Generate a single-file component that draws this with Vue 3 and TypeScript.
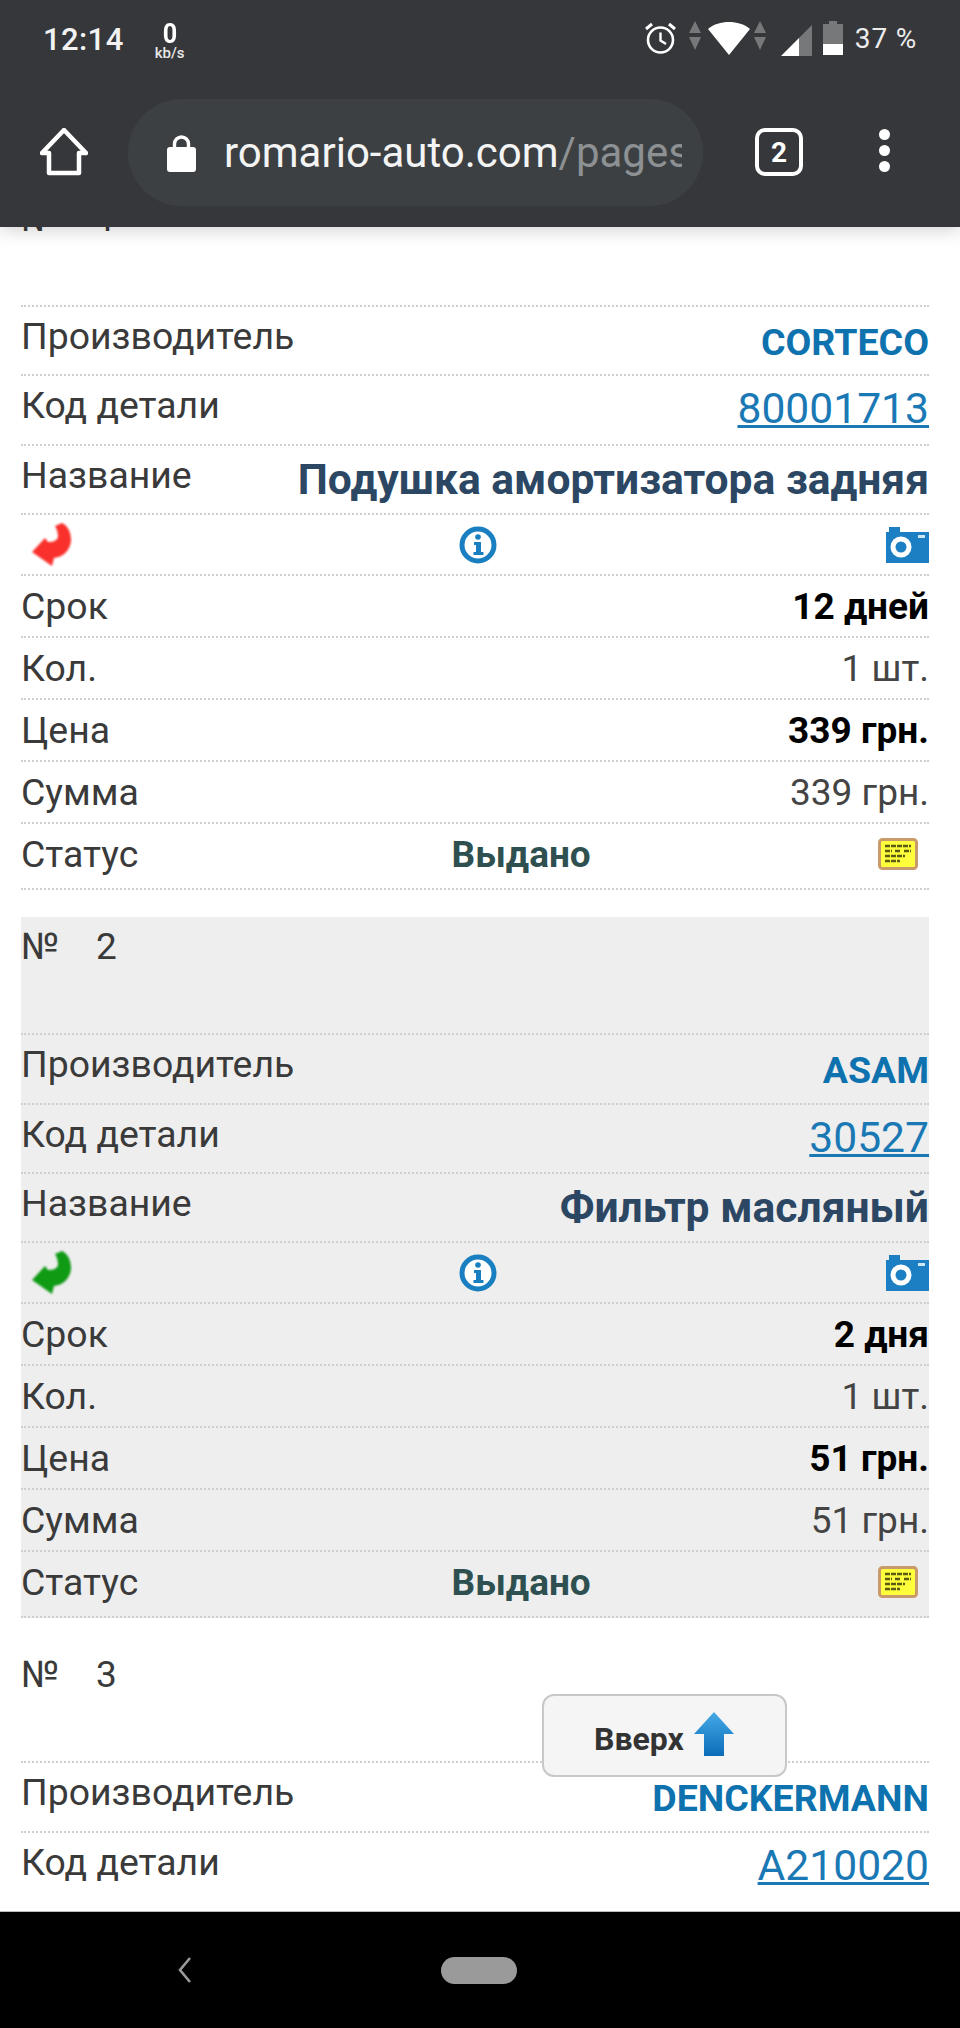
<template>
  <div class="screen">
    <header class="top">
      <div class="status">
        <span class="time">12:14</span>
        <span class="speed"><b>0</b><i>kb/s</i></span>
        <div class="status-icons">
          <svg width="33" height="34" viewBox="0 0 33 34" fill="none" stroke="#fff">
            <circle cx="16.5" cy="19" r="12.5" stroke-width="2.6" />
            <path d="M16.5 11.5V19.5L22 23" stroke-width="2.4" />
            <path d="M2 8L8 3M31 8L25 3" stroke-width="3" />
          </svg>
          <svg class="updown" width="12" height="30" viewBox="0 0 12 30" fill="#77787a">
            <path d="M6 0L12 12H0zM0 16H12L6 29z" />
          </svg>
          <svg width="42" height="34" viewBox="0 0 42 34" fill="#fff">
            <path d="M0 8C6 3 13 1 21 1S36 3 42 8L21 34z" />
          </svg>
          <svg class="updown" width="12" height="30" viewBox="0 0 12 30" fill="#77787a">
            <path d="M6 0L12 12H0zM0 16H12L6 29z" />
          </svg>
          <svg class="signal" width="31" height="31" viewBox="0 0 31 31">
            <path d="M31 0V31H18V13z" fill="#77787a" />
            <path d="M18 13V31H0z" fill="#fff" />
          </svg>
          <svg width="20" height="34" viewBox="0 0 20 34">
            <path d="M6 0H14V3H20V23H0V3H6z" fill="#77787a" />
            <rect y="23" width="20" height="11" fill="#fff" />
          </svg>
          <span class="battery">37 %</span>
        </div>
      </div>
      <div class="toolbar">
        <svg class="home" width="48" height="48" viewBox="0 0 48 48" fill="none" stroke="#fff" stroke-width="4.5" stroke-linejoin="round">
          <path d="M2 25L24 2L46 25H39V45H9V25z" />
        </svg>
        <div class="url">
          <svg width="29" height="38" viewBox="0 0 29 38">
            <path d="M7.5 15V10a7 7 0 0 1 14 0V15" fill="none" stroke="#fff" stroke-width="3.4" />
            <rect y="13" width="29" height="25" rx="3" fill="#fff" />
          </svg>
          <div class="url-text">romario-auto.com<span>/pages</span></div>
        </div>
        <div class="tabs">2</div>
        <div class="dots"><span></span><span></span><span></span></div>
      </div>
    </header>

    <main class="content">
      <section v-for="order in orders" :key="order.num" :class="['order', { shaded: order.shaded }]">
        <div class="num-row"><span>№</span><span>{{ order.num }}</span></div>
        <div class="row tall">
          <span class="label">Производитель</span>
          <span class="brand">{{ order.brand }}</span>
        </div>
        <div class="row tall">
          <span class="label">Код детали</span>
          <a class="code">{{ order.code }}</a>
        </div>
        <template v-if="order.name">
          <div class="row tall">
            <span class="label">Название</span>
            <span class="name">{{ order.name }}</span>
          </div>
          <div class="row icons">
            <svg class="back" width="44" height="46" viewBox="0 0 44 46" :fill="order.shaded ? '#0f9a14' : '#f9302c'">
              <path d="M2 30L15 16L18 20C23 20 27 19 28 15C28 11 27 7 25 4L32 1C38 4 41 10 41 19C40 28 34 35 24 36L22 44z" />
            </svg>
            <svg class="info" width="38" height="38" viewBox="0 0 38 38">
              <circle cx="19" cy="19" r="16" fill="#fff" stroke="#1a7fc1" stroke-width="5" />
              <circle cx="19" cy="11" r="2.8" fill="#1a7fc1" />
              <path d="M15 16H22V26H24.5V29H14.5V26H17V19H15z" fill="#1a7fc1" />
            </svg>
            <svg class="camera" width="43" height="37" viewBox="0 0 43 37">
              <path d="M0 6H3V1H14V6H43V37H0z" fill="#1c7fc4" />
              <circle cx="15" cy="21" r="10.5" fill="#fff" />
              <circle cx="15" cy="21" r="5.5" fill="#1c7fc4" />
              <rect x="32" y="9" width="7" height="3" fill="#cfe6f5" />
            </svg>
          </div>
          <div class="row">
            <span class="label">Срок</span>
            <b class="black">{{ order.term }}</b>
          </div>
          <div class="row">
            <span class="label">Кол.</span>
            <span class="plain">1 шт.</span>
          </div>
          <div class="row">
            <span class="label">Цена</span>
            <b class="black">{{ order.price }}</b>
          </div>
          <div class="row">
            <span class="label">Сумма</span>
            <span class="plain">{{ order.price }}</span>
          </div>
          <div class="row last">
            <span class="label">Статус</span>
            <b class="state">Выдано</b>
            <svg class="note" width="40" height="32" viewBox="0 0 40 32">
              <rect x="1.5" y="1.5" width="37" height="29" rx="3" fill="#ffff3c" stroke="#c99a6c" stroke-width="3" />
              <path d="M7 8H33M7 13H14M17 13H23M26 13H33M7 18H27M7 23H22" stroke="#5a5a10" stroke-width="2.4" stroke-dasharray="5 1" />
            </svg>
          </div>
        </template>
      </section>
    </main>

    <button class="up">
      <span>Вверх</span>
      <svg width="40" height="44" viewBox="0 0 40 44">
        <defs>
          <linearGradient id="upfill" x1="0" y1="0" x2="0" y2="1">
            <stop offset="0" stop-color="#45a9e6" />
            <stop offset="1" stop-color="#0b6db9" />
          </linearGradient>
        </defs>
        <path d="M20 0L40 22H30V44H10V22H0z" fill="url(#upfill)" />
      </svg>
    </button>

    <footer class="nav">
      <svg width="18" height="26" viewBox="0 0 18 26" fill="none" stroke="#9a9a9a" stroke-width="2.6">
        <path d="M14 1L4 13L14 25" />
      </svg>
      <div class="pill"></div>
    </footer>
  </div>
</template>

<script setup lang="ts">
interface Order {
  num: number
  brand: string
  code: string
  name?: string
  term?: string
  price?: string
  shaded?: boolean
}

const orders: Order[] = [
  { num: 1, brand: 'CORTECO', code: '80001713', name: 'Подушка амортизатора задняя', term: '12 дней', price: '339 грн.' },
  { num: 2, brand: 'ASAM', code: '30527', name: 'Фильтр масляный', term: '2 дня', price: '51 грн.', shaded: true },
  { num: 3, brand: 'DENCKERMANN', code: 'A210020' },
]
</script>

<style>
html,
body {
  margin: 0;
  background: #fff;
}
</style>

<style scoped>
.screen {
  position: relative;
  width: 960px;
  height: 2028px;
  display: flex;
  flex-direction: column;
  overflow: hidden;
  background: #fff;
  font-family: Roboto, "Liberation Sans", sans-serif;
}

.top {
  position: relative;
  z-index: 2;
  flex: none;
  height: 227px;
  background: #36373b;
  box-shadow: 0 2px 18px rgba(0, 0, 0, 0.2);
  color: #fff;
}

.status {
  height: 78px;
  display: flex;
  align-items: center;
  padding: 0 43px 0 43px;
}

.time {
  font-size: 31px;
  font-weight: 500;
  color: #f2f2f2;
  letter-spacing: 0.4px;
}

.speed {
  margin-left: 31px;
  padding-top: 5px;
  display: flex;
  flex-direction: column;
  align-items: center;
  line-height: 1;
}

.speed b {
  font-size: 28px;
  font-weight: 700;
  line-height: 24px;
  transform: scaleX(0.9);
}

.speed i {
  font-style: normal;
  font-weight: 500;
  font-size: 15px;
  line-height: 15px;
  color: #e8e8e8;
}

.status-icons {
  margin-left: auto;
  display: flex;
  align-items: flex-start;
  padding-top: 21px;
  height: 78px;
  box-sizing: border-box;
}

.updown {
  margin: 0 4px 0 12px;
}

.status-icons svg:nth-child(3) {
  margin-left: 3px;
}

.status-icons svg:nth-child(4) {
  margin-left: 4px;
  margin-right: 0;
}

.signal {
  margin: 4px 11px 0 15px;
}

.battery {
  margin-left: 12px;
  font-size: 28px;
  line-height: 36px;
  color: #ececec;
  letter-spacing: 0.8px;
}

.toolbar {
  height: 149px;
  display: flex;
  align-items: flex-start;
  padding: 21px 0 0 40px;
}

.home {
  margin-top: 29px;
}

.url {
  margin-left: 40px;
  width: 575px;
  height: 107px;
  box-sizing: border-box;
  padding-left: 39px;
  display: flex;
  align-items: center;
  gap: 28px;
  border-radius: 54px;
  background: #3c4043;
}

.url svg {
  flex: none;
}

.url-text {
  width: 458px;
  overflow: hidden;
  white-space: nowrap;
  font-size: 42px;
  line-height: 56px;
  color: #f4f4f4;
}

.url-text span {
  color: #8d9193;
}

.tabs {
  margin: 29px 0 0 52px;
  width: 48px;
  height: 48px;
  box-sizing: border-box;
  border: 4px solid #fff;
  border-radius: 10px;
  display: flex;
  align-items: center;
  justify-content: center;
  font-size: 28px;
  font-weight: 700;
}

.dots {
  margin: 30px 0 0 76px;
  display: flex;
  flex-direction: column;
  gap: 5px;
}

.dots span {
  width: 11px;
  height: 11px;
  border-radius: 50%;
  background: #fff;
}

.content {
  flex: 1;
  min-height: 0;
  overflow: hidden;
  padding: 0 31px 0 21px;
}

.order {
  margin-bottom: 27px;
  color: #3a3a3a;
}

.order:first-child {
  margin-top: -38px;
}

.shaded {
  background: #eeeeee;
}

.num-row {
  height: 116px;
  padding-top: 8px;
  box-sizing: border-box;
  display: flex;
  gap: 37px;
  font-size: 37px;
  line-height: 44px;
}

.row {
  height: 62px;
  box-sizing: border-box;
  display: flex;
  justify-content: space-between;
  align-items: center;
  border-top: 2px dotted #cfcfcf;
}

.row.tall {
  height: 69.4px;
  align-items: flex-start;
}

.row.last {
  height: 68px;
  padding-bottom: 4px;
  border-bottom: 2px dotted #cfcfcf;
}

.row.icons {
  height: 61px;
}

.label {
  font-size: 37.4px;
  line-height: 40px;
}

.tall .label {
  margin-top: 9px;
}

.brand {
  margin-top: 14px;
  font-size: 37.5px;
  font-weight: 700;
  line-height: 42px;
  color: #0d72ae;
}

.code {
  margin-top: 9px;
  font-size: 42.6px;
  line-height: 46px;
  color: #1a79b5;
  text-decoration: underline;
  text-decoration-thickness: 3px;
}

.name {
  margin-top: 9px;
  font-size: 42.6px;
  font-weight: 700;
  line-height: 48px;
  color: #2c4763;
}

.black {
  font-size: 37px;
  font-weight: 700;
  color: #000;
}

.plain {
  font-size: 37px;
  color: #444;
}

.state {
  margin-left: 26px;
  font-size: 37px;
  color: #2f5050;
}

.note {
  margin-right: 11px;
  filter: blur(0.6px);
}

.back {
  margin-left: 9px;
  filter: blur(0.9px);
}

.info {
  margin-right: 5px;
  filter: blur(0.6px);
}

.camera {
  filter: blur(0.6px);
}

.up {
  position: absolute;
  left: 542px;
  top: 1694px;
  z-index: 1;
  width: 245px;
  height: 83px;
  box-sizing: border-box;
  padding: 0 0 0 50px;
  display: flex;
  align-items: center;
  gap: 10px;
  background: #f5f5f5;
  border: 2.5px solid #c8c8c8;
  border-radius: 12px;
  font-family: inherit;
  font-size: 32px;
  font-weight: 700;
  color: #333;
}

.up span {
  margin-top: 6px;
}

.up svg {
  margin-top: -4px;
}

.nav {
  position: relative;
  z-index: 2;
  flex: none;
  height: 117px;
  background: #000;
  border-top: 1px solid #bbb;
  box-sizing: border-box;
  display: flex;
  align-items: flex-start;
  padding: 45px 0 0 176px;
}

.pill {
  margin-left: 247px;
  width: 76px;
  height: 27px;
  border-radius: 14px;
  background: #9a9a9a;
}
</style>
